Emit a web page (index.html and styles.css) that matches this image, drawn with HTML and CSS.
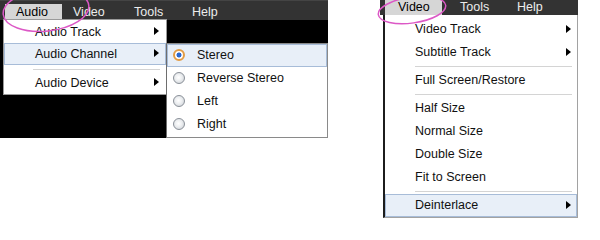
FILE: index.html
```html
<!DOCTYPE html>
<html>
<head>
    <meta charset="utf-8">
    <title>Player Menus</title>
    <link rel="stylesheet" href="styles.css">
</head>
<body>
<div class="page">
    <div class="player player-audio">
        <div class="menubar">
            <span class="menubar-item is-open">Audio</span>
            <span class="menubar-item">Video</span>
            <span class="menubar-item">Tools</span>
            <span class="menubar-item">Help</span>
        </div>
        <div class="screen"></div>

        <ul class="menu menu-audio">
            <li class="menu-item has-sub">Audio Track</li>
            <li class="menu-item has-sub is-hover">Audio Channel</li>
            <li class="menu-sep"></li>
            <li class="menu-item has-sub">Audio Device</li>
        </ul>

        <ul class="menu menu-channel">
            <li class="menu-item is-hover"><span class="radio is-checked"></span>Stereo</li>
            <li class="menu-item"><span class="radio"></span>Reverse Stereo</li>
            <li class="menu-item"><span class="radio"></span>Left</li>
            <li class="menu-item"><span class="radio"></span>Right</li>
        </ul>

        <svg class="mark" viewBox="0 0 328 138">
            <ellipse cx="46" cy="10" rx="43" ry="21" transform="rotate(-6 46 10)"/>
        </svg>
    </div>

    <div class="player player-video">
        <div class="menubar">
            <span class="menubar-item is-open">Video</span>
            <span class="menubar-item">Tools</span>
            <span class="menubar-item">Help</span>
        </div>

        <ul class="menu menu-video">
            <li class="menu-item has-sub">Video Track</li>
            <li class="menu-item has-sub">Subtitle Track</li>
            <li class="menu-sep"></li>
            <li class="menu-item">Full Screen/Restore</li>
            <li class="menu-sep"></li>
            <li class="menu-item">Half Size</li>
            <li class="menu-item">Normal Size</li>
            <li class="menu-item">Double Size</li>
            <li class="menu-item">Fit to Screen</li>
            <li class="menu-sep"></li>
            <li class="menu-item has-sub is-hover">Deinterlace</li>
        </ul>

        <svg class="mark" viewBox="0 0 200 218">
            <ellipse cx="32" cy="10" rx="34" ry="13" transform="rotate(-8 32 10)"/>
        </svg>
    </div>
</div>
</body>
</html>
```

FILE: styles.css
```css
:root {
    --bar-color: #333333;
    --bar-text: #ececec;
    --tab-color: #d6d6d6;
    --menu-border: #9a9a9a;
    --hover-bg: #e8eff8;
    --hover-border: #a7bcd8;
    --sep-color: #d4d4d4;
    --mark-color: #dc58c6;
}

html, body {
    margin: 0;
    padding: 0;
    background: #ffffff;
}

body {
    font-family: "Liberation Sans", Arial, sans-serif;
    font-size: 12.5px;
    color: #111111;
}

.page {
    display: flex;
    align-items: flex-start;
    width: 600px;
    height: 240px;
}

.player {
    position: relative;
}

.player-audio {
    width: 328px;
    height: 138px;
    display: flex;
    flex-direction: column;
}

.player-video {
    width: 200px;
    height: 218px;
    margin-left: 52px;
}

/* top menu bar */

.menubar {
    background: var(--bar-color);
    display: grid;
    color: var(--bar-text);
}

.player-audio .menubar {
    height: 20px;
    box-sizing: border-box;
    padding: 3px 0 0 5px;
    grid-template-columns: 57px 61px 58px auto;
    border-top: 1px solid #444;
}

.player-audio .menubar-item {
    height: 16px;
    line-height: 16px;
    padding-left: 11px;
}

.player-video .menubar {
    width: 198px;
    height: 15px;
    padding-left: 5px;
    box-sizing: border-box;
    grid-template-columns: 62px 57px auto;
}

.player-video .menubar-item {
    height: 15px;
    line-height: 15px;
    padding-left: 13px;
}

.player-video .menubar-item.is-open {
    width: 57px;
    box-sizing: border-box;
}

.menubar-item.is-open {
    background: var(--tab-color);
    color: #000000;
}

.screen {
    flex: 1;
    background: #000000;
}

/* drop-down menus */

.menu {
    position: absolute;
    margin: 0;
    padding: 0;
    list-style: none;
    background: #ffffff;
    box-sizing: border-box;
}

.menu-item {
    position: relative;
    white-space: nowrap;
}

.menu-item.is-hover {
    background: var(--hover-bg);
    box-shadow: inset 0 0 0 1px var(--hover-border);
}

.menu-item.has-sub::after {
    content: "";
    position: absolute;
    top: 50%;
    margin-top: -5px;
    border-left: 5px solid #000000;
    border-top: 4.5px solid transparent;
    border-bottom: 4.5px solid transparent;
}

.menu-sep {
    height: 1px;
    background: var(--sep-color);
}

.menu-audio {
    left: 3px;
    top: 19px;
    width: 164px;
    height: 76px;
    padding-top: 1px;
    border: 1px solid var(--menu-border);
}

.menu-audio .menu-item {
    height: 22px;
    line-height: 22px;
    padding-left: 31px;
}

.menu-audio .menu-item::after {
    right: 7px;
}

.menu-audio .menu-sep {
    margin: 4px 6px 2px 29px;
}

.menu-channel {
    left: 166px;
    top: 43px;
    width: 162px;
    height: 95px;
    border: 1px solid #8a8a8a;
    border-left-color: #6e6e6e;
}

.menu-channel .menu-item {
    height: 23px;
    line-height: 23px;
    padding-left: 30px;
}

.radio {
    position: absolute;
    left: 6px;
    top: 5px;
    width: 12px;
    height: 12px;
    box-sizing: border-box;
    border-radius: 50%;
    border: 1px solid #8a9098;
    background: radial-gradient(circle at 45% 45%, #ffffff 0, #eef0f2 40%, #c6cbd1 100%);
}

.radio.is-checked {
    border: 2px solid #e39c45;
    background: radial-gradient(circle, #2a68d0 0, #2a68d0 2.2px, #ffffff 2.8px);
}

.menu-video {
    left: 3px;
    top: 15px;
    width: 195px;
    height: 203px;
    padding-top: 3px;
    border-left: 2px solid #1c1c1c;
    border-right: 1px solid #a2a2a2;
    border-bottom: 1px solid #a2a2a2;
}

.menu-video .menu-item {
    height: 23px;
    line-height: 23px;
    padding-left: 30px;
}

.menu-video .menu-item::after {
    right: 6px;
}

.menu-video .menu-sep {
    margin: 2px 5px 2px 30px;
}

/* hand-drawn circles over the menus */

.mark {
    position: absolute;
    left: 0;
    top: 0;
    width: 100%;
    height: 100%;
    overflow: visible;
    pointer-events: none;
}

.mark ellipse {
    fill: none;
    stroke: var(--mark-color);
    stroke-width: 1.5;
}
```
